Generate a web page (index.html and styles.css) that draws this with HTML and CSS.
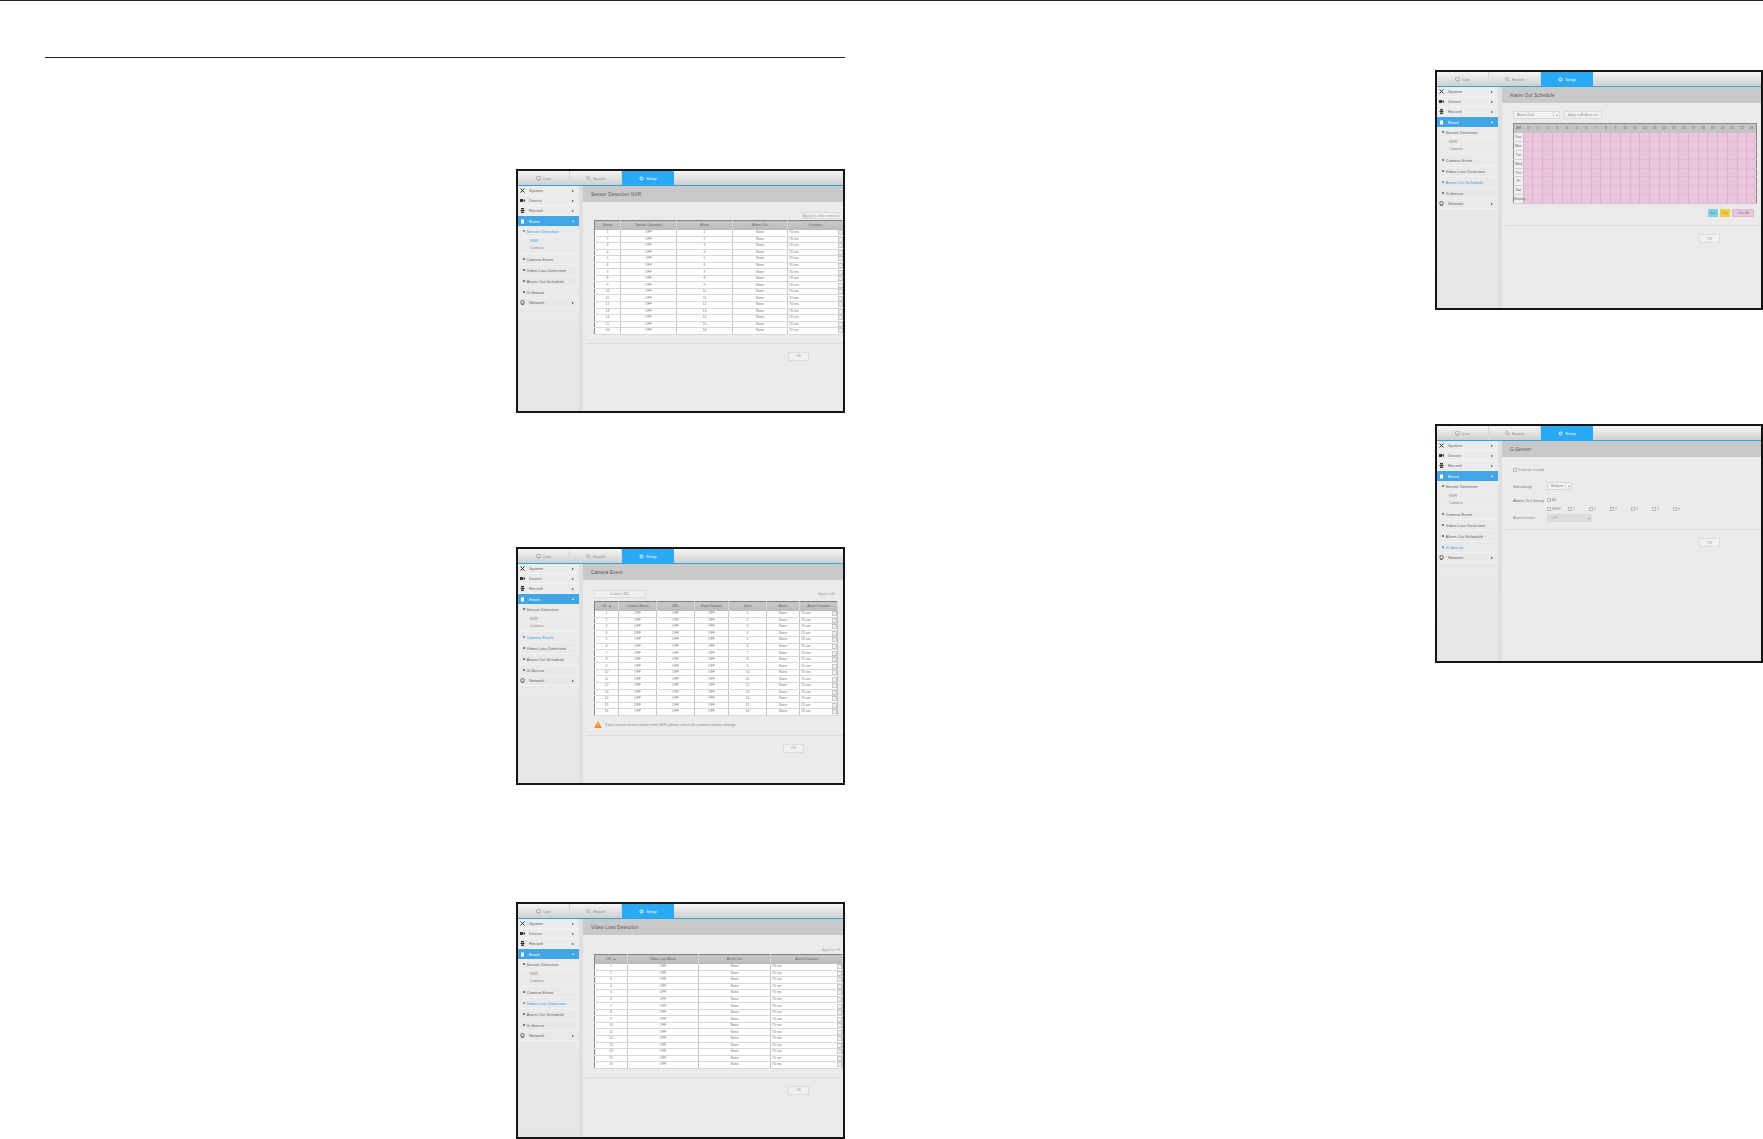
FILE: index.html
```html
<!DOCTYPE html>
<html lang="en">
<head>
  <meta charset="UTF-8">
  <title>Event setup</title>
  <link rel="stylesheet" href="styles.css">
</head>
<body>
  <div class="page">
    <div class="col col-left">
      <hr class="rule">

      <section class="shot shot-sensor" data-active="Sensor Detection" data-sub="NVR">
        <div class="tabbar"></div>
        <div class="shot-body">
          <nav class="side"></nav>
          <div class="main">
            <h2 class="title">Sensor Detection NVR</h2>
            <div class="tools tools-right"><span class="btn btn-apply">Apply to other sensors</span></div>
            <table class="data" data-rows="n,OFF,n,None,dur">
              <colgroup><col class="w26"><col class="w56"><col class="w56"><col class="w55"><col class="w56"></colgroup>
              <thead><tr><th>Sensor</th><th>Sensor Operation</th><th>Alarm</th><th>Alarm Out</th><th>Duration</th></tr></thead>
              <tbody></tbody>
            </table>
            <hr class="sep">
            <div class="foot"><span class="btn btn-ok">OK</span></div>
          </div>
        </div>
      </section>

      <section class="shot shot-camera" data-active="Camera Event">
        <div class="tabbar"></div>
        <div class="shot-body">
          <nav class="side"></nav>
          <div class="main">
            <h2 class="title">Camera Event</h2>
            <div class="tools tools-split">
              <span class="btn btn-wide">Camera MD</span>
              <span class="apply-text">Apply to All</span>
            </div>
            <table class="data data-narrow" data-rows="n,OFF,OFF,OFF,n,None,dur">
              <colgroup><col class="w24"><col class="w38"><col class="w38"><col class="w34"><col class="w38"><col class="w33"><col class="w38"></colgroup>
              <thead><tr><th>CH. ▲</th><th>Camera Event</th><th>MD</th><th>Event Sample</th><th>Zone</th><th>Alarm</th><th>Alarm Duration</th></tr></thead>
              <tbody></tbody>
            </table>
            <p class="warn">
              <svg class="warn-icon" viewBox="0 0 10 9"><path d="M5 0 10 9H0z" fill="#ee8a1d"/><path d="M4.6 3h.8v3.4h-.8zM4.6 7h.8v.9h-.8z" fill="#fff"/></svg>
              If you cannot receive events from NVR, please check the network camera settings.
            </p>
            <hr class="sep">
            <div class="foot"><span class="btn btn-ok">OK</span></div>
          </div>
        </div>
      </section>

      <section class="shot shot-video" data-active="Video Loss Detection">
        <div class="tabbar"></div>
        <div class="shot-body">
          <nav class="side"></nav>
          <div class="main">
            <h2 class="title">Video Loss Detection</h2>
            <div class="tools tools-right"><span class="apply-text">Apply to CH</span></div>
            <table class="data" data-rows="n,OFF,None,dur">
              <colgroup><col class="w33"><col class="w71"><col class="w72"><col class="w72"></colgroup>
              <thead><tr><th>CH. ▲</th><th>Video Loss Alarm</th><th>Alarm Out</th><th>Alarm Duration</th></tr></thead>
              <tbody></tbody>
            </table>
            <hr class="sep">
            <div class="foot"><span class="btn btn-ok">OK</span></div>
          </div>
        </div>
      </section>
    </div>

    <div class="col col-right">
      <section class="shot shot-alarm" data-active="Alarm Out Schedule">
        <div class="tabbar"></div>
        <div class="shot-body">
          <nav class="side"></nav>
          <div class="main">
            <h2 class="title">Alarm Out Schedule</h2>
            <div class="tools tools-left">
              <span class="select select-alarm">Alarm Out1<i class="caret"></i></span>
              <span class="btn btn-apply-all">Apply to All Alarm out</span>
            </div>
            <table class="sched"><thead></thead><tbody></tbody></table>
            <div class="legend">
              <span class="chip chip-add">Add</span>
              <span class="chip chip-del">Del</span>
              <span class="chip chip-clear">Clear All</span>
            </div>
            <hr class="sep">
            <div class="foot"><span class="btn btn-ok">OK</span></div>
          </div>
        </div>
      </section>

      <section class="shot shot-gsensor" data-active="G-Sensor">
        <div class="tabbar"></div>
        <div class="shot-body">
          <nav class="side"></nav>
          <div class="main">
            <h2 class="title">G-Sensor</h2>
            <div class="form">
              <div class="form-check"><i class="box"></i>G-sensor is used.</div>
              <div class="form-line">
                <span class="label label-big">Sensitivity</span>
                <span class="select select-small">Medium<i class="caret"></i></span>
              </div>
              <div class="form-line form-alarm">
                <span class="label label-big">Alarm Out Setup</span>
                <span class="opt"><i class="box"></i>All</span>
              </div>
              <div class="opts">
                <span class="opt"><i class="box"></i>BEEP</span>
                <span class="opt"><i class="box"></i>1</span>
                <span class="opt"><i class="box"></i>2</span>
                <span class="opt"><i class="box"></i>3</span>
                <span class="opt"><i class="box"></i>4</span>
                <span class="opt"><i class="box"></i>5</span>
                <span class="opt"><i class="box"></i>6</span>
              </div>
              <div class="form-line form-dur">
                <span class="label">Alarm Duration</span>
                <span class="select select-off">OFF<i class="caret"></i></span>
              </div>
            </div>
            <hr class="sep">
            <div class="foot"><span class="btn btn-ok">OK</span></div>
          </div>
        </div>
      </section>
    </div>
  </div>

  <script src="script.js"></script>
</body>
</html>
```

FILE: styles.css
```css
* {
  box-sizing: border-box;
}

html, body {
  margin: 0;
  height: 1139px;
  overflow: hidden;
  background: #fff;
}

body {
  font-family: "Liberation Sans", Arial, sans-serif;
  color: #777;
  border-top: 1px solid #222;
}

.page {
  display: grid;
  grid-template-columns: 845px 1fr;
}

.col {
  display: flex;
  flex-direction: column;
  align-items: flex-end;
}

.col-left {
  padding-left: 45px;
}

.rule {
  width: 100%;
  height: 1px;
  margin: 56px 0 0;
  border: none;
  background: #222;
}

/* one screenshot of the recorder ui */
.shot {
  width: 329px;
  display: flex;
  flex-direction: column;
  border: 2px solid #151515;
  background: #ebebeb;
  overflow: hidden;
}

.shot-sensor { height: 244px; margin-top: 111px; }
.shot-camera { height: 238px; margin-top: 134px; }
.shot-video { height: 237px; margin-top: 117px; }
.shot-alarm { width: 328px; height: 240px; margin-top: 69px; }
.shot-gsensor { width: 328px; height: 239px; margin-top: 114px; }

.tabbar {
  flex: none;
  height: 15px;
  display: flex;
  background: linear-gradient(#f6f6f6, #cfcfcf);
  border-bottom: 1px solid #2aa5e8;
}

.tab {
  width: 52px;
  display: flex;
  align-items: center;
  justify-content: center;
  gap: 2px;
  font-size: 4px;
  color: #8a8a8a;
  border-right: 1px solid #d6d6d6;
}

.tab svg {
  width: 5px;
  height: 5px;
}

.tab-on {
  background: #2aa9f4;
  color: #fff;
  border-right: none;
}

.shot-body {
  flex: 1;
  display: flex;
  min-height: 0;
}

.side {
  flex: none;
  width: 65px;
  padding-right: 4px;
  font-size: 4.2px;
  background: #dfdfdf;
}

.side-list {
  background: linear-gradient(#ececec, #e6e6e6);
  height: 100%;
  color: #666;
}

.side-row {
  height: 10px;
  display: flex;
  align-items: center;
  padding: 0 2px;
  gap: 4px;
  border-bottom: 1px solid #f2f2f2;
}

.side-row svg {
  flex: none;
  width: 5px;
  height: 5px;
}

.side-row b {
  font-weight: normal;
  flex: 1;
}

.side-row i {
  flex: none;
  width: 0;
  height: 0;
  margin-right: 3px;
  border-top: 1.5px solid transparent;
  border-bottom: 1.5px solid transparent;
  border-left: 2px solid #444;
}

.side-row-on {
  background: #42a6e6;
  color: #fff;
  border-bottom: none;
}

.side-row-on i {
  border-top: none;
  border-left: 1.5px solid transparent;
  border-right: 1.5px solid transparent;
  border-bottom: 2px solid #fff;
}

.side-sub {
  height: 11px;
  display: flex;
  align-items: center;
  padding-left: 5px;
  gap: 2px;
  border-bottom: 1px solid #f0f0f0;
}

.side-sub::before {
  content: "";
  width: 1.5px;
  height: 1.5px;
  border-radius: 50%;
  background: currentColor;
}

.side-leaf {
  height: 7.5px;
  display: flex;
  align-items: center;
  padding-left: 12px;
  font-size: 3.8px;
  color: #888;
}

.side-gap {
  height: 2px;
  border-bottom: 1px solid #f0f0f0;
}

.is-on {
  color: #3d9ee0;
}

.main {
  flex: 1;
  min-width: 0;
  display: flex;
  flex-direction: column;
}

.title {
  flex: none;
  height: 16px;
  margin: 0;
  padding-left: 8px;
  display: flex;
  align-items: center;
  background: #c9c9c9;
  font-size: 4.6px;
  font-weight: normal;
  letter-spacing: 0.2px;
  color: #555;
}

.tools {
  flex: none;
  display: flex;
  align-items: center;
  padding: 0 3px 0 11px;
}

.shot-sensor .tools { height: 18px; padding-top: 9px; justify-content: flex-end; }
.shot-video .tools { height: 19px; padding-top: 11px; justify-content: flex-end; }
.shot-camera .tools { height: 21px; padding-top: 6px; padding-right: 8px; justify-content: space-between; }
.shot-alarm .tools { height: 20px; padding-top: 4px; gap: 4px; }

.btn {
  display: flex;
  align-items: center;
  justify-content: center;
  border: 1px solid #dcdcdc;
  background: #f1f1f1;
  font-size: 3.6px;
  color: #9a9a9a;
}

.btn-apply { width: 38px; height: 7px; }
.btn-wide { width: 51px; height: 8px; }
.btn-apply-all { width: 38px; height: 8px; font-size: 3.2px; }

.apply-text {
  font-size: 3.4px;
  color: #aaa;
}

.data {
  flex: none;
  width: 249px;
  margin-left: 11px;
  border-collapse: collapse;
  table-layout: fixed;
  background: #fff;
  border: 1px solid #858585;
  font-size: 3.4px;
  color: #777;
}

.data-narrow {
  width: 244px;
}

.data th {
  height: 9px;
  padding: 0;
  font-weight: normal;
  color: #666;
  background: linear-gradient(#c9c9c9, #b9b9b9);
  border-right: 1px solid #d4d4d4;
}

.data td {
  height: 6.55px;
  padding: 0;
  line-height: 5px;
  text-align: center;
  border-right: 1px solid #c4c4c4;
  border-bottom: 1px solid #d8d8d8;
}

.w24 { width: 24px; }
.w26 { width: 26px; }
.w33 { width: 33px; }
.w34 { width: 34px; }
.w38 { width: 38px; }
.w55 { width: 55px; }
.w56 { width: 56px; }
.w71 { width: 71px; }
.w72 { width: 72px; }

.dur {
  display: flex;
  justify-content: space-between;
  align-items: center;
  padding-left: 1px;
}

.dur i {
  width: 5px;
  height: 5px;
  border: 1px solid #c8c8c8;
  background: #eee;
}

.warn {
  flex: none;
  height: 10px;
  margin: 4px 0 0 11px;
  display: flex;
  align-items: center;
  gap: 3px;
  font-size: 3.6px;
  color: #8a8a8a;
}

.warn-icon {
  width: 8px;
  height: 7px;
}

.sep {
  flex: none;
  width: 100%;
  height: 1px;
  margin: 8px 0 0 3px;
  border: none;
  background: #dcdcdc;
}

.shot-camera .sep { margin-top: 5px; }

.foot {
  flex: none;
  display: flex;
  padding: 8px 0 0 205px;
}

.shot-camera .foot { padding-left: 200px; }
.shot-alarm .foot { padding-left: 197px; }
.shot-gsensor .foot { padding-left: 197px; }

.btn-ok {
  width: 21px;
  height: 9px;
}

.select {
  height: 8px;
  display: flex;
  align-items: center;
  justify-content: space-between;
  border: 1px solid #d8d8d8;
  background: #f2f2f2;
  font-size: 3.4px;
  padding-left: 3px;
  color: #888;
}

.caret {
  width: 6px;
  height: 100%;
  display: flex;
  align-items: center;
  justify-content: center;
  border-left: 1px solid #d8d8d8;
}

.caret::before {
  content: "";
  border-left: 1.2px solid transparent;
  border-right: 1.2px solid transparent;
  border-top: 1.5px solid #555;
}

.select-alarm { width: 47px; }
.select-small { width: 25px; }
.select-off { width: 45px; background: #dedede; color: #aaa; }

.sched {
  flex: none;
  width: 244px;
  margin-left: 11px;
  border-collapse: collapse;
  table-layout: fixed;
  border: 1px solid #8a8a8a;
  font-size: 3.4px;
  color: #666;
}

.sched th {
  height: 9px;
  padding: 0;
  font-weight: normal;
  background: #c4c4c4;
}

.sched .sched-day {
  width: 24px;
  height: 8.9px;
  background: #f0f0f0;
  border-bottom: 1px solid #cfcfcf;
}

.sched td {
  padding: 0;
  background: #eac6dd;
  border-left: 1px solid #d9b3cd;
  border-bottom: 1px solid #e2bcd5;
}

.legend {
  flex: none;
  display: flex;
  justify-content: flex-end;
  gap: 2px;
  padding: 5px 7px 0 0;
}

.chip {
  height: 8px;
  display: flex;
  align-items: center;
  justify-content: center;
  font-size: 3.2px;
  color: #8a8a8a;
}

.chip-add { width: 10px; background: #7fd3e6; }
.chip-del { width: 10px; background: #f3cf3d; }
.chip-clear { width: 22px; background: #e8c6dc; border: 1px solid #dcb9cf; }

.shot-alarm .sep { margin-top: 8px; }

.form {
  flex: none;
  padding: 9px 0 0 11px;
  font-size: 3.6px;
  color: #8a8a8a;
}

.form-check,
.opt {
  display: flex;
  align-items: center;
  gap: 1px;
}

.form-check {
  height: 7px;
  margin-bottom: 9px;
  font-size: 3.4px;
}

.box {
  flex: none;
  width: 4px;
  height: 4px;
  border: 1px solid #bdbdbd;
  background: #eee;
}

.form-line {
  display: flex;
  align-items: center;
}

.label {
  width: 34px;
  color: #888;
  font-size: 3.3px;
}

.label-big {
  font-size: 4.2px;
  color: #777;
}

.form-alarm {
  margin-top: 5px;
  height: 10px;
}

.opts {
  display: flex;
  height: 7px;
  padding-left: 34px;
  font-size: 3.2px;
}

.opts .opt {
  width: 21px;
}

.form-dur {
  margin-top: 2px;
}

.shot-gsensor .sep {
  margin-top: 7px;
}
```

FILE: script.js
```js
const ICONS = {
  live: '<rect x="1" y="1" width="8" height="6" rx="1" fill="none" stroke="currentColor"/><path d="M3 9h4" stroke="currentColor"/>',
  search: '<circle cx="4" cy="4" r="3" fill="none" stroke="currentColor"/><path d="M6 6l3 3" stroke="currentColor"/>',
  setup: '<circle cx="5" cy="5" r="3" fill="none" stroke="currentColor" stroke-width="2"/>',
  system: '<path d="M1 1l8 8M9 1L1 9" stroke="#333" stroke-width="2"/>',
  device: '<path d="M0 2h6v6H0zM6 5l4-3v6z" fill="#333"/>',
  record: '<path d="M2 0h6v3H2zM1 4h8v2H1zM2 7h6v3H2z" fill="#333"/>',
  event: '<path d="M2 1h6v8H2z" fill="currentColor"/>',
  network: '<circle cx="5" cy="4.5" r="3.5" fill="none" stroke="#333" stroke-width="1.4"/><path d="M2 9h6" stroke="#333"/>'
};

function icon(name) {
  return `<svg viewBox="0 0 10 10">${ICONS[name]}</svg>`;
}

function tabbarHtml() {
  return `
    <div class="tab">${icon("live")}Live</div>
    <div class="tab">${icon("search")}Search</div>
    <div class="tab tab-on">${icon("setup")}Setup</div>`;
}

function sideHtml(active, sub) {
  const on = (name) => (name === active ? " is-on" : "");
  const row = (name, ic, cls) =>
    `<div class="side-row ${cls || ""}">${icon(ic)}<b>${name}</b><i></i></div>`;
  return `<div class="side-list">
    ${row("System", "system")}
    ${row("Device", "device")}
    ${row("Record", "record")}
    ${row("Event", "event", "side-row-on")}
    <div class="side-sub side-sub-first${on("Sensor Detection")}">Sensor Detection</div>
    <div class="side-leaf${sub === "NVR" ? " is-on" : ""}">NVR</div>
    <div class="side-leaf">Camera</div>
    <div class="side-gap"></div>
    <div class="side-sub${on("Camera Event")}">Camera Event</div>
    <div class="side-sub${on("Video Loss Detection")}">Video Loss Detection</div>
    <div class="side-sub${on("Alarm Out Schedule")}">Alarm Out Schedule</div>
    <div class="side-sub${on("G-Sensor")}">G-Sensor</div>
    ${row("Network", "network")}
  </div>`;
}

function fillRows(table) {
  const spec = table.dataset.rows.split(",");
  const body = table.querySelector("tbody");
  for (let i = 1; i <= 16; i++) {
    const tr = document.createElement("tr");
    tr.innerHTML = spec.map((c) => {
      if (c === "n") return `<td>${i}</td>`;
      if (c === "dur") return '<td><div class="dur">70 sec<i></i></div></td>';
      return `<td>${c}</td>`;
    }).join("");
    body.appendChild(tr);
  }
}

function fillSchedule(table) {
  const days = ["Sun", "Mon", "Tue", "Wed", "Thu", "Fri", "Sat", "Holiday"];
  let head = "<tr><th>AM</th>";
  for (let h = 0; h < 24; h++) head += `<th>${h}</th>`;
  table.querySelector("thead").innerHTML = head + "</tr>";
  table.querySelector("tbody").innerHTML = days.map((d) =>
    `<tr><th class="sched-day">${d}</th>${"<td></td>".repeat(24)}</tr>`
  ).join("");
}

document.querySelectorAll(".shot").forEach((shot) => {
  shot.querySelector(".tabbar").innerHTML = tabbarHtml();
  shot.querySelector(".side").innerHTML = sideHtml(shot.dataset.active, shot.dataset.sub);
});
document.querySelectorAll(".data").forEach(fillRows);
document.querySelectorAll(".sched").forEach(fillSchedule);
```
